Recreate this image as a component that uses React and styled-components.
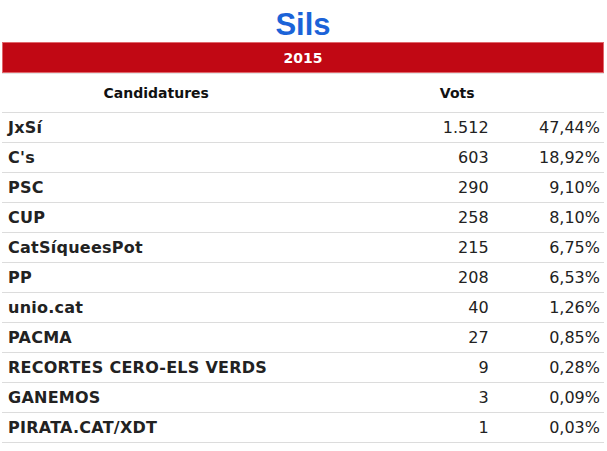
import React from "react";
import styled, { createGlobalStyle } from "styled-components";

const Global = createGlobalStyle`
  html, body { margin: 0; padding: 0; background: #fff; }
  body { font-family: "DejaVu Sans", Verdana, sans-serif; }
`;

const Page = styled.div`
  width: 607px;
  padding: 0 3px 0 2px;
  box-sizing: border-box;
`;

const Title = styled.h1`
  margin: 0;
  height: 42px;
  padding-top: 8px;
  box-sizing: border-box;
  text-align: center;
  font-family: "Liberation Sans", Arial, sans-serif;
  font-weight: bold;
  font-size: 31px;
  line-height: 34px;
  color: #1b63d8;
`;

const YearBar = styled.div`
  height: 31px;
  box-sizing: border-box;
  background: #c10814;
  border: 1px solid #e0676c;
  color: #fff;
  font-weight: bold;
  font-size: 14px;
  display: flex;
  align-items: center;
  justify-content: center;
`;

const Table = styled.table`
  width: 100%;
  border-collapse: collapse;
  border-top: 1px solid #e4e4e4;
`;

const HeadCell = styled.th`
  height: 38px;
  padding: 0;
  font-size: 14px;
  font-weight: bold;
  color: #111;
  text-align: center;
  border-bottom: 1px solid #dcdcdc;
`;

const Row = styled.tr`
  height: 30px;
  border-bottom: 1px solid #dcdcdc;
`;

const NameCell = styled.td`
  width: 304px;
  padding: 0 0 0 6px;
  font-size: 16px;
  letter-spacing: 0.25px;
  font-weight: bold;
  color: #222;
  white-space: nowrap;
`;

const NumCell = styled.td`
  padding: 0 ${(p) => p.$pad}px 0 0;
  text-align: right;
  font-size: 16px;
  color: #222;
  width: ${(p) => p.$w}px;
  white-space: nowrap;
`;

const data = [
  ["JxSí", "1.512", "47,44%"],
  ["C's", "603", "18,92%"],
  ["PSC", "290", "9,10%"],
  ["CUP", "258", "8,10%"],
  ["CatSíqueesPot", "215", "6,75%"],
  ["PP", "208", "6,53%"],
  ["unio.cat", "40", "1,26%"],
  ["PACMA", "27", "0,85%"],
  ["RECORTES CERO-ELS VERDS", "9", "0,28%"],
  ["GANEMOS", "3", "0,09%"],
  ["PIRATA.CAT/XDT", "1", "0,03%"],
];

export default function App() {
  return (
    <>
      <Global />
      <Page>
        <Title>Sils</Title>
        <YearBar>2015</YearBar>
        <Table>
          <thead>
            <tr>
              <HeadCell>Candidatures</HeadCell>
              <HeadCell colSpan={2}>Vots</HeadCell>
            </tr>
          </thead>
          <tbody>
            {data.map(([n, v, p]) => (
              <Row key={n}>
                <NameCell>{n}</NameCell>
                <NumCell $w={183} $pad={5}>{v}</NumCell>
                <NumCell $w={108} $pad={4}>{p}</NumCell>
              </Row>
            ))}
          </tbody>
        </Table>
      </Page>
    </>
  );
}
